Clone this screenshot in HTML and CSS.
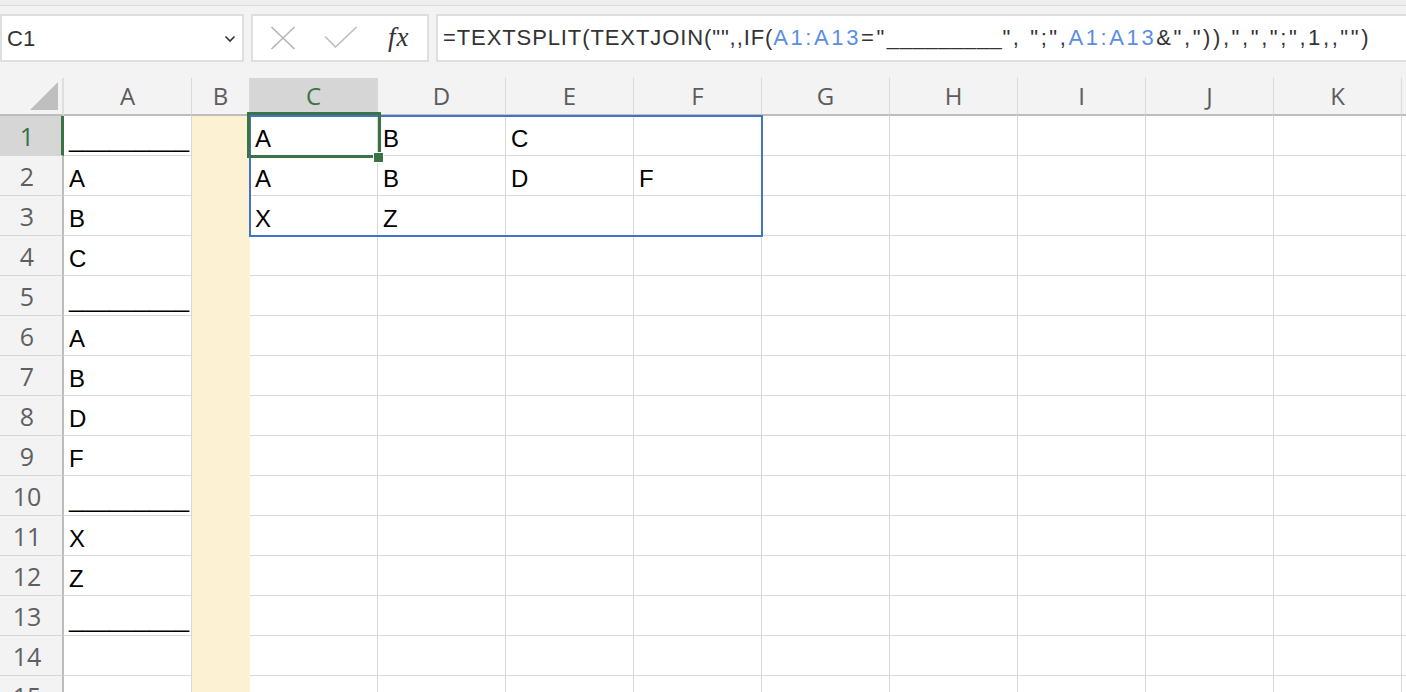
FILE: index.html
```html
<!DOCTYPE html>
<html lang="en">
<head>
<meta charset="utf-8">
<title>Excel - TEXTSPLIT</title>
<link rel="stylesheet" href="styles.css">
</head>
<body>
<div class="app">
  <div class="topline"></div>
  <div class="toolbar">
    <div class="namebox">
      <span class="name">C1</span>
      <svg class="chev" width="12" height="8" viewBox="0 0 12 8"><path d="M1.5 1.5 L6 6 L10.5 1.5" fill="none" stroke="#333" stroke-width="1.6"/></svg>
    </div>
    <div class="btnbox">
      <svg class="ico-x" width="26" height="24" viewBox="0 0 26 24"><path d="M1.5 1 L24.5 23 M24.5 1 L1.5 23" stroke="#b4b4b4" stroke-width="1.6" fill="none"/></svg>
      <svg class="ico-ok" width="34" height="22" viewBox="0 0 34 22"><path d="M1 10.5 L11.5 21 L32.5 1" stroke="#bdbdbd" stroke-width="1.6" fill="none"/></svg>
      <span class="fx">fx</span>
    </div>
    <div class="formula">=TEXTSPLIT(TEXTJOIN("",,IF(<span class="tail"><span class="ref">A1:A13</span>="<span class="us">_________</span>", ";",<span class="ref">A1:A13</span>&amp;",")),",",";",1,,"")</span></div>
  </div>

  <div class="sheet">
    <div class="grid">
      <div class="corner"><svg width="64" height="36" viewBox="0 0 64 36"><polygon points="30,32 58,32 58,4" fill="#bfbfbf"/></svg></div>
      <div class="ch">A</div><div class="ch">B</div><div class="ch sel">C</div><div class="ch">D</div><div class="ch">E</div><div class="ch">F</div><div class="ch">G</div><div class="ch">H</div><div class="ch">I</div><div class="ch">J</div><div class="ch">K</div><div class="ch fill"></div>

      <div class="rh sel">1</div><div class="c">_________</div><div class="c b"></div><div class="c">A</div><div class="c">B</div><div class="c">C</div><div class="c"></div><div class="c"></div><div class="c"></div><div class="c"></div><div class="c"></div><div class="c"></div><div class="c"></div>
      <div class="rh">2</div><div class="c">A</div><div class="c b"></div><div class="c">A</div><div class="c">B</div><div class="c">D</div><div class="c">F</div><div class="c"></div><div class="c"></div><div class="c"></div><div class="c"></div><div class="c"></div><div class="c"></div>
      <div class="rh">3</div><div class="c">B</div><div class="c b"></div><div class="c">X</div><div class="c">Z</div><div class="c"></div><div class="c"></div><div class="c"></div><div class="c"></div><div class="c"></div><div class="c"></div><div class="c"></div><div class="c"></div>
      <div class="rh">4</div><div class="c">C</div><div class="c b"></div><div class="c"></div><div class="c"></div><div class="c"></div><div class="c"></div><div class="c"></div><div class="c"></div><div class="c"></div><div class="c"></div><div class="c"></div><div class="c"></div>
      <div class="rh">5</div><div class="c">_________</div><div class="c b"></div><div class="c"></div><div class="c"></div><div class="c"></div><div class="c"></div><div class="c"></div><div class="c"></div><div class="c"></div><div class="c"></div><div class="c"></div><div class="c"></div>
      <div class="rh">6</div><div class="c">A</div><div class="c b"></div><div class="c"></div><div class="c"></div><div class="c"></div><div class="c"></div><div class="c"></div><div class="c"></div><div class="c"></div><div class="c"></div><div class="c"></div><div class="c"></div>
      <div class="rh">7</div><div class="c">B</div><div class="c b"></div><div class="c"></div><div class="c"></div><div class="c"></div><div class="c"></div><div class="c"></div><div class="c"></div><div class="c"></div><div class="c"></div><div class="c"></div><div class="c"></div>
      <div class="rh">8</div><div class="c">D</div><div class="c b"></div><div class="c"></div><div class="c"></div><div class="c"></div><div class="c"></div><div class="c"></div><div class="c"></div><div class="c"></div><div class="c"></div><div class="c"></div><div class="c"></div>
      <div class="rh">9</div><div class="c">F</div><div class="c b"></div><div class="c"></div><div class="c"></div><div class="c"></div><div class="c"></div><div class="c"></div><div class="c"></div><div class="c"></div><div class="c"></div><div class="c"></div><div class="c"></div>
      <div class="rh">10</div><div class="c">_________</div><div class="c b"></div><div class="c"></div><div class="c"></div><div class="c"></div><div class="c"></div><div class="c"></div><div class="c"></div><div class="c"></div><div class="c"></div><div class="c"></div><div class="c"></div>
      <div class="rh">11</div><div class="c">X</div><div class="c b"></div><div class="c"></div><div class="c"></div><div class="c"></div><div class="c"></div><div class="c"></div><div class="c"></div><div class="c"></div><div class="c"></div><div class="c"></div><div class="c"></div>
      <div class="rh">12</div><div class="c">Z</div><div class="c b"></div><div class="c"></div><div class="c"></div><div class="c"></div><div class="c"></div><div class="c"></div><div class="c"></div><div class="c"></div><div class="c"></div><div class="c"></div><div class="c"></div>
      <div class="rh">13</div><div class="c">_________</div><div class="c b"></div><div class="c"></div><div class="c"></div><div class="c"></div><div class="c"></div><div class="c"></div><div class="c"></div><div class="c"></div><div class="c"></div><div class="c"></div><div class="c"></div>
      <div class="rh">14</div><div class="c"></div><div class="c b"></div><div class="c"></div><div class="c"></div><div class="c"></div><div class="c"></div><div class="c"></div><div class="c"></div><div class="c"></div><div class="c"></div><div class="c"></div><div class="c"></div>
      <div class="rh">15</div><div class="c"></div><div class="c b"></div><div class="c"></div><div class="c"></div><div class="c"></div><div class="c"></div><div class="c"></div><div class="c"></div><div class="c"></div><div class="c"></div><div class="c"></div><div class="c"></div>
    </div>
    <div class="range"></div>
    <div class="active"></div>
    <div class="handle"></div>
  </div>
</div>
</body>
</html>
```

FILE: styles.css
```css
html, body {
  margin: 0;
  padding: 0;
  background: #f3f3f3;
  overflow: hidden;
}
.app {
  width: 1406px;
  height: 692px;
  overflow: hidden;
  font-family: "Liberation Sans", Arial, sans-serif;
}
.topline {
  height: 5px;
  background: #efefef;
  border-bottom: 1px solid #dcdcdc;
  box-shadow: 0 1px 1px rgba(0,0,0,0.04);
}
.toolbar {
  height: 72px;
  box-sizing: border-box;
  padding-top: 8px;
  display: flex;
  align-items: flex-start;
  gap: 7px;
  background: #f3f3f3;
}
.namebox, .btnbox, .formula {
  height: 48px;
  box-sizing: border-box;
  background: #fff;
  border: 2px solid #dedede;
}
.namebox {
  width: 244px;
  display: flex;
  align-items: center;
  justify-content: space-between;
  padding: 0 6px 0 5px;
}
.name {
  font-size: 22px;
  color: #333;
  padding-top: 2px;
}
.chev { margin-top: 2px; }
.btnbox {
  width: 178px;
  display: flex;
  align-items: center;
  padding-left: 17px;
}
.ico-x { margin-right: 28px; }
.ico-ok { margin-right: 30px; margin-top: -2px; }
.fx {
  font-family: "Liberation Serif", "Times New Roman", serif;
  font-style: italic;
  font-size: 27px;
  color: #333;
  letter-spacing: 1px;
  margin-top: -2px;
}
.formula {
  flex: 1;
  border-right: none;
  padding-left: 5px;
  font-size: 22px;
  line-height: 44px;
  color: #333;
  white-space: nowrap;
  overflow: hidden;
  letter-spacing: 0.9px;
}
.formula .tail { letter-spacing: 2.6px; }
.formula .us { letter-spacing: 0.6px; }
.ref { color: #5b8de6; }

.sheet {
  position: relative;
  height: 614px;
  overflow: hidden;
}
.grid {
  display: grid;
  grid-template-columns: 64px 128px 58px repeat(9, 128px) 1fr;
  grid-auto-rows: 40px;
  grid-template-rows: 38px;
}
.corner {
  background: #f3f3f3;
  border-bottom: 2px solid #bdbdbd;
  border-right: 2px solid #dedede;
  box-sizing: border-box;
}
.corner svg { display: block; }
.ch {
  box-sizing: border-box;
  background: #f3f3f3;
  border-right: 1px solid #d9d9d9;
  border-bottom: 2px solid #bdbdbd;
  text-align: center;
  font-family: "Open Sans", sans-serif;
  font-size: 24px;
  line-height: 36px;
  color: #5c5c5c;
}
.ch.sel {
  background: #d6d6d6;
  color: #3a7446;
}
.ch.fill { border-right: none; }
.rh {
  box-sizing: border-box;
  background: #f3f3f3;
  border-right: 2px solid #bdbdbd;
  border-bottom: 1px solid #d6d6d6;
  text-align: center;
  padding-right: 8px;
  font-family: "Open Sans", sans-serif;
  font-size: 25px;
  line-height: 40px;
  color: #5f5f5f;
}
.rh.sel {
  background: #d6d6d6;
  color: #3a7446;
  border-right: 3px solid #3a7446;
  padding-right: 7px;
}
.c {
  box-sizing: border-box;
  background: #fff;
  border-right: 1px solid #d9d9d9;
  border-bottom: 1px solid #d9d9d9;
  padding: 6px 0 0 5px;
  font-size: 24px;
  line-height: 34px;
  color: #000;
  white-space: nowrap;
  overflow: hidden;
}
.c.b {
  background: #fcf2d3;
  border-bottom-color: #fcf2d3;
  border-right-color: #fcf2d3;
}

.range {
  position: absolute;
  left: 249px;
  top: 37px;
  width: 514px;
  height: 122px;
  box-sizing: border-box;
  border: 2px solid #4472c4;
}
.active {
  position: absolute;
  left: 247px;
  top: 34px;
  width: 134px;
  height: 46px;
  box-sizing: border-box;
  border: 3px solid #3a7446;
}
.handle {
  position: absolute;
  left: 373px;
  top: 74px;
  width: 9px;
  height: 9px;
  background: #3a7446;
  border: 1px solid #fff;
}
```
